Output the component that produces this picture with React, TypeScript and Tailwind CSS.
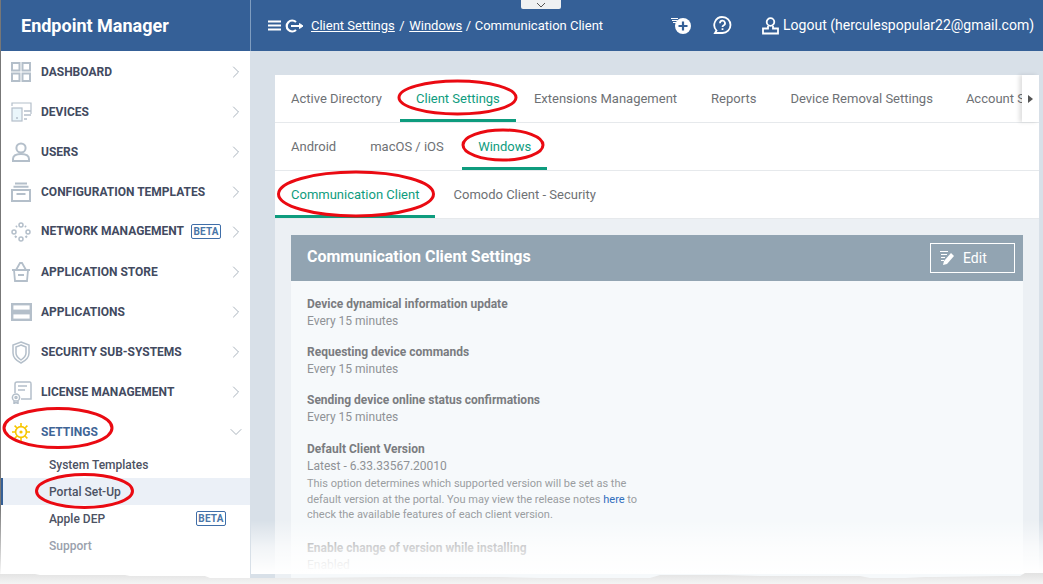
import React from "react";
import { ChevronRight, ChevronDown } from "lucide-react";

const G = "#b4bfca";
const ic = { fill: "none", stroke: G, strokeWidth: 1.6 };

const icons: Record<string, React.ReactNode> = {
  dash: (
    <svg width="20" height="20" viewBox="0 0 20 20" {...ic} strokeWidth={2}>
      <rect x="1" y="1" width="7.5" height="7.5" /><rect x="11.5" y="1" width="7.5" height="7.5" />
      <rect x="1" y="11.5" width="7.5" height="7.5" /><rect x="11.5" y="11.5" width="7.5" height="7.5" />
    </svg>
  ),
  dev: (
    <svg width="21" height="20" viewBox="0 0 21 20" {...ic} strokeWidth={1.2}>
      <path d="M1 4V1h19v11" /><rect x="1" y="6" width="10" height="13" fill="#eaf6fb" />
      <path d="M5 16h2M13 9h7M13 13h7M13 17h3" strokeWidth={1.6} />
    </svg>
  ),
  user: (
    <svg width="20" height="20" viewBox="0 0 20 20" {...ic} strokeWidth={2}>
      <circle cx="10" cy="6" r="4.6" /><path d="M2 19v-2c0-3 3-5 8-5s8 2 8 5v2z" />
    </svg>
  ),
  conf: (
    <svg width="20" height="20" viewBox="0 0 20 20" {...ic} strokeWidth={2}>
      <path d="M4 1.5h12M2.5 4.7h15" /><rect x="1" y="8" width="18" height="11" /><path d="M5.5 12h9" />
    </svg>
  ),
  net: (
    <svg width="20" height="20" viewBox="0 0 20 20" {...ic} strokeWidth={1.5}>
      <circle cx="10" cy="3" r="2" /><circle cx="10" cy="17" r="2" /><circle cx="3" cy="10" r="2" /><circle cx="17" cy="10" r="2" />
      <path d="M5 5l1-1M14 4l1 1M4 14l1.500 1.500M14.500 15.500L16 14" strokeWidth={2} />
    </svg>
  ),
  store: (
    <svg width="20" height="20" viewBox="0 0 20 20" {...ic} strokeWidth={1.8}>
      <path d="M1 8h18M3 8l1 11h12l1-11M5 8l4-7h2l4 7M7 13h6" />
    </svg>
  ),
  apps: (
    <svg width="21" height="18" viewBox="0 0 21 18" {...ic} strokeWidth={2.4}>
      <rect x="1.200" y="1.200" width="18.600" height="6.600" /><rect x="1.200" y="10.200" width="18.600" height="6.600" />
    </svg>
  ),
  sec: (
    <svg width="20" height="23" viewBox="0 0 20 23" {...ic} strokeWidth={1.5}>
      <path d="M10 1l8 3v8c0 5-4 8-8 10-4-2-8-5-8-10V4z" /><path d="M10 4l5 2v6c0 3-2 5-5 7-3-2-5-4-5-7V6z" />
    </svg>
  ),
  lic: (
    <svg width="21" height="23" viewBox="0 0 21 23" {...ic} strokeWidth={1.5}>
      <path d="M4 12V3q0-2 2-2h13q1 0 1 2v15H10" /><path d="M7 5h9M7 9h7" /><circle cx="5" cy="16.500" r="3.600" /><circle cx="5" cy="16.500" r="1" /><path d="M3 20v2.500l2-1 2 1V20" />
    </svg>
  ),
  gear: (
    <svg width="20" height="20" viewBox="0 0 20 20" fill="none" stroke="#f7c600" strokeWidth={1.6}>
      <circle cx="10" cy="10" r="5.400" /><circle cx="10" cy="10" r="0.800" fill="#f7c600" />
      <path d="M10 1v3M10 16v3M1 10h3M16 10h3M3.600 3.600l2.200 2.200M14.200 14.200l2.200 2.200M3.600 16.400l2.200-2.200M14.200 5.800l2.200-2.200" />
    </svg>
  ),
};

const Beta = ({ className = "" }: { className?: string }) => (
  <span className={`flex h-[15px] w-[30px] items-center justify-center rounded-[2px] border border-[#3f6ea8] text-[10px] font-bold tracking-[0.2px] text-[#4a76a8] ${className}`}>BETA</span>
);

const nav: [string, string, boolean?][] = [
  ["dash", "DASHBOARD"],
  ["dev", "DEVICES"],
  ["user", "USERS"],
  ["conf", "CONFIGURATION TEMPLATES"],
  ["net", "NETWORK MANAGEMENT", true],
  ["store", "APPLICATION STORE"],
  ["apps", "APPLICATIONS"],
  ["sec", "SECURITY SUB-SYSTEMS"],
  ["lic", "LICENSE MANAGEMENT"],
];

const Sidebar = () => (
  <aside className="flex w-[250px] shrink-0 flex-col bg-white pt-[1px]">
    {nav.map(([k, label, beta]) => (
      <div key={label} className="flex h-[40px] items-center pl-[11px] pr-[4px]">
        <span className="flex w-[30px] shrink-0 items-center justify-start">{icons[k]}</span>
        <span className={`text-[12px] font-bold text-[#424a60] ${beta ? "mb-[2px]" : ""}`}>{label}</span>
        {beta && <Beta className="mb-[2px] ml-[7px]" />}
        <ChevronRight className="ml-auto" size={20} strokeWidth={1.2} color="#a9b3bd" />
      </div>
    ))}
    <div className="flex h-[40px] items-center pl-[11px] pr-[4px]">
      <span className="flex w-[30px] shrink-0">{icons.gear}</span>
      <span className="text-[12px] font-bold text-[#3f6596]">SETTINGS</span>
      <ChevronDown className="ml-auto" size={20} strokeWidth={1} color="#9aa5b0" />
    </div>
    <div className="mt-[-1px] text-[12px] font-medium text-[#4c5263]">
      <div className="flex h-[27px] items-center pl-[49px]">System Templates</div>
      <div className="flex h-[27px] items-center border-l-[3px] border-[#356097] bg-[#ebf0f7] pl-[46px]">Portal Set-Up</div>
      <div className="flex h-[27px] items-center pl-[49px] pr-[24px]">Apple DEP<Beta className="ml-auto" /></div>
      <div className="flex h-[27px] items-center pl-[49px] text-[#9aa1ad]">Support</div>
    </div>
  </aside>
);

const Tab = ({ label, active, cls = "" }: { label: string; active?: boolean; cls?: string }) => (
  <div className={`flex h-full shrink-0 items-center whitespace-nowrap border-b-[3px] pt-[3px] ${cls} ${active ? "border-[#0e9c7e] text-[#0e9c7e]" : "border-transparent text-[#6e7175]"}`}>
    {label}
  </div>
);

const Row = ({ children }: { children: React.ReactNode }) => (
  <div className="flex h-[48px] overflow-hidden border-b-[1px] border-[#e6e9ec] bg-white text-[13px]">{children}</div>
);

const Field = ({ t, v, mt = "mt-[13px]" }: { t: string; v: string; mt?: string }) => (
  <div className={mt}>
    <div className="text-[12px] font-bold leading-[17px] text-[#7a7c80]">{t}</div>
    <div className="text-[12px] leading-[17px] text-[#8f9296]">{v}</div>
  </div>
);

const Ell = ({ cx, cy, rx, ry }: { cx: number; cy: number; rx: number; ry: number }) => (
  <ellipse cx={cx} cy={cy} rx={rx} ry={ry} fill="none" stroke="#ea0a12" strokeWidth={3} />
);

export default function App() {
  return (
    <div className="relative h-[584px] w-[1043px] overflow-hidden bg-[#d8e0e8] font-['Roboto',sans-serif]">
      <header className="flex h-[51px] bg-[#356097] text-white">
        <div className="flex w-[251px] shrink-0 items-center border-r border-[#7f9dc0] pl-[21px] text-[18px] font-bold">Endpoint Manager</div>
        <div className="flex flex-1 items-center text-[13px]">
          <svg className="ml-[17px]" width="13" height="11" viewBox="0 0 13 11" fill="none" stroke="white" strokeWidth={2}><path d="M0 1.500h13M0 5.500h13M0 9.500h13" /></svg>
          <svg className="ml-[4px]" width="19" height="14" viewBox="0 0 19 14" fill="none" stroke="white" strokeWidth={2.200}><path d="M11 3a5.500 5.500 0 1 0 0 8M6 7h11" /><path d="M14.500 4.500L18 7l-3.500 2.500z" fill="white" strokeWidth={1} /></svg>
          <span className="ml-[7px] underline">Client Settings</span>
          <span className="mx-[4.500px]">/</span>
          <span className="underline">Windows</span>
          <span className="mx-[3.500px]">/</span>
          <span>Communication Client</span>
          <svg className="ml-[68px]" width="21" height="18" viewBox="0 0 21 18"><path d="M0 1.500h7M1 3.500h5M2 5.500h3" stroke="white" strokeWidth={1} /><circle cx="12" cy="9" r="8" fill="white" /><path d="M12 4.500v9M7.500 9h9" stroke="#356097" strokeWidth={2.200} /></svg>
          <svg className="ml-[21px]" width="19" height="19" viewBox="0 0 19 19" fill="none" stroke="white" strokeWidth={1.800}><path d="M9.500 1a8 8 0 0 1 0 16H2l1.500-2.500A8 8 0 0 1 9.500 1z" /><path d="M7 7.200a2.500 2.500 0 1 1 3.500 2.300c-.7.400-1 .7-1 1.500M9.500 12.200v1.800" /></svg>
          <svg className="ml-[30px]" width="17" height="18" viewBox="0 0 17 18" fill="none" stroke="white" strokeWidth={1.800}><circle cx="8.500" cy="5" r="3.800" /><path d="M6 9v2.500H1V16.500h15V11.500H11V9" /></svg>
          <span className="ml-[4px] whitespace-nowrap text-[14px]">Logout (herculespopular22@gmail.com)</span>
        </div>
      </header>

      <div className="flex h-[533px]">
        <Sidebar />
        <main className="min-w-0 flex-1 pl-[25px] pr-[4px] pt-[24px]">
          <div className="flex h-full flex-col bg-[#ecf0f4]">
            <div className="relative">
              <Row>
                <Tab label="Active Directory" cls="pl-[16px] pr-[18px]" />
                <Tab label="Client Settings" active cls="w-[116px] justify-center" />
                <Tab label="Extensions Management" cls="pl-[18px] pr-[17px]" />
                <Tab label="Reports" cls="px-[17px]" />
                <Tab label="Device Removal Settings" cls="pl-[17px] pr-[16px]" />
                <Tab label="Account Settings" cls="px-[17px]" />
              </Row>
              <div className="absolute bottom-[1px] right-0 top-0 flex w-[17px] items-center bg-white pl-[6px] shadow-[-3px_0_4px_rgba(0,0,0,0.12)]">
                <span className="h-0 w-0 border-y-[4.500px] border-l-[5px] border-y-transparent border-l-[#555]" />
              </div>
            </div>
            <Row>
              <Tab label="Android" cls="pl-[16px] pr-[17px]" />
              <Tab label="macOS / iOS" cls="w-[109px] pl-[17px]" />
              <Tab label="Windows" active cls="w-[85px] justify-center" />
            </Row>
            <Row>
              <Tab label="Communication Client" active cls="w-[160px] pl-[16px]" />
              <Tab label="Comodo Client - Security" cls="pl-[18.500px]" />
            </Row>
            <section className="mx-[16px] mt-[16px] flex-1 bg-[#f6f9fb]">
              <div className="flex h-[46px] items-center justify-between bg-[#92a4b2] pl-[16px] pr-[8px] text-white">
                <span className="mb-[2px] text-[16px] font-bold">Communication Client Settings</span>
                <span className="flex h-[30px] w-[85px] items-center border border-white pl-[9px] text-[14px]">
                  <svg width="15" height="16" viewBox="0 0 15 16"><path d="M0 1.500h8M1 4.500h6M1 7.500h4M1 10.500h3" stroke="white" strokeWidth={1.200} /><path d="M3 15l1-4 7-8 3 3-7 8z" fill="white" /></svg>
                  <span className="ml-[8px]">Edit</span>
                </span>
              </div>
              <div className="w-[345px] pl-[16px] pt-[1px]">
                <Field t="Device dynamical information update" v="Every 15 minutes" mt="mt-[14px]" />
                <Field t="Requesting device commands" v="Every 15 minutes" mt="mt-[14px]" />
                <Field t="Sending device online status confirmations" v="Every 15 minutes" mt="mt-[14px]" />
                <Field t="Default Client Version" v="Latest - 6.33.33567.20010" mt="mt-[15px]" />
                <p className="mt-[1px] whitespace-nowrap text-[11px] leading-[15.500px] text-[#9a9da1]">
                  This option determines which supported version will be set as the<br />
                  default version at the portal. You may view the release notes <span className="text-[#2f6ebd]">here</span> to<br />
                  check the available features of each client version.
                </p>
                <Field t="Enable change of version while installing" v="Enabled" mt="mt-[17px]" />
              </div>
            </section>
          </div>
        </main>
      </div>

      {/* left window edge */}
      <div className="absolute left-0 top-0 h-[576px] w-[1px] bg-gradient-to-b from-[#777] from-[88%] to-white" />

      {/* collapse handle */}
      <div className="absolute left-[521px] top-0 flex h-[9px] w-[40px] items-center justify-center rounded-b-[2px] bg-[#eef0f2]">
        <svg width="10" height="6" viewBox="0 0 10 6" fill="none" stroke="#555" strokeWidth={1}><path d="M1 1l4 4 4-4" /></svg>
      </div>

      {/* annotations */}
      <svg className="pointer-events-none absolute left-0 top-0" width="1043" height="584">
        <Ell cx={457.500} cy={97.500} rx={58.500} ry={16.500} />
        <Ell cx={503} cy={145} rx={40} ry={15} />
        <Ell cx={356} cy={194} rx={77.500} ry={22} />
        <Ell cx={58} cy={428} rx={54} ry={19.500} />
        <Ell cx={84.500} cy={491} rx={48} ry={16.500} />
      </svg>

      {/* torn bottom fade, over the main column only: the sidebar is white there */}
      <div className="pointer-events-none absolute bottom-[10px] left-[251px] right-0 h-[54px] bg-gradient-to-b from-transparent via-white/65 via-50% to-white" />
      <svg className="pointer-events-none absolute bottom-0 left-0" width="1043" height="14" viewBox="0 0 1043 14">
        <defs>
          <linearGradient id="torn" x1="0" y1="0" x2="0" y2="1">
            <stop offset="0" stopColor="#e2e2e2" />
            <stop offset="1" stopColor="#f4f4f4" />
          </linearGradient>
        </defs>
        <path d="M0 4H35L40 5H125L130 6H205L210 8H300L390 7H500L540 8H650L660 5H725L760 6H860L870 8H905L925 7H935L1000 6H1020L1025 3H1043V14H0z" fill="url(#torn)" />
      </svg>
    </div>
  );
}
